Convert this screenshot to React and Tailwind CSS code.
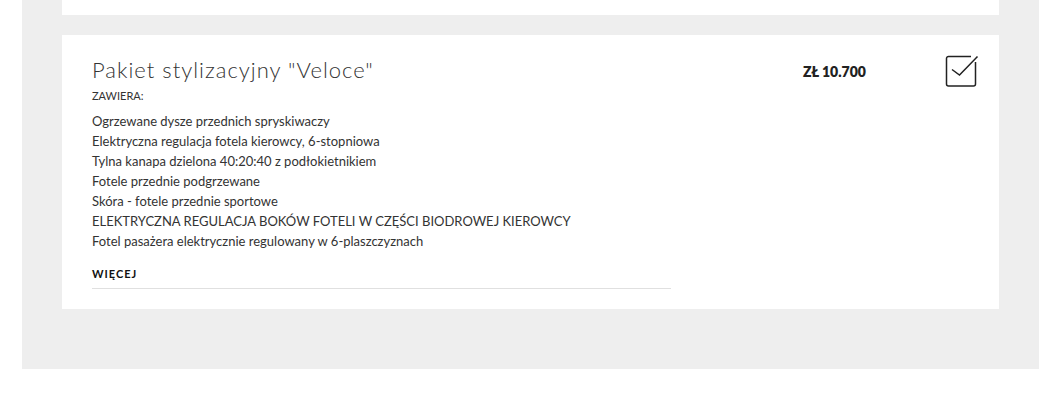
import React from 'react';

const items = [
  'Ogrzewane dysze przednich spryskiwaczy',
  'Elektryczna regulacja fotela kierowcy, 6-stopniowa',
  'Tylna kanapa dzielona 40:20:40 z podłokietnikiem',
  'Fotele przednie podgrzewane',
  'Skóra - fotele przednie sportowe',
  'ELEKTRYCZNA REGULACJA BOKÓW FOTELI W CZĘŚCI BIODROWEJ KIEROWCY',
  'Fotel pasażera elektrycznie regulowany w 6-plaszczyznach',
];

const CheckIcon = () => (
  <svg width="34" height="32" viewBox="0 0 34 32" fill="none">
    <path d="M26 1.5H3.5a2 2 0 0 0-2 2v25.5a2 2 0 0 0 2 2h25a2 2 0 0 0 2-2V7" stroke="#222" strokeWidth="1.5" />
    <path d="M7 14.5l7.5 5.5L32.5 1.5" stroke="#222" strokeWidth="1.5" />
  </svg>
);

const App = () => {
  return (
    <div className="min-h-screen bg-white font-['Lato','Liberation_Sans',sans-serif] text-[#333]">
      <div className="ml-[22px] w-[1017px] bg-[#eeeeee] px-[40px] pb-[60px]">
        <div className="h-[15px] bg-white" />

        <div className="mt-[20px] flex bg-white pl-[30px] pr-[20px] pt-[20px] pb-[20px]">
          <div className="w-[579px]">
            <h2 className="text-[22px] font-light leading-[30px] tracking-[1px] text-[#333]">
              Pakiet stylizacyjny "Veloce"
            </h2>
            <div className="mt-[4px] text-[11px] uppercase leading-[14px]">Zawiera:</div>
            <ul className="mt-[8px] text-[13px] leading-[20px]">
              {items.map((item, i) => (
                <li key={i}>{item}</li>
              ))}
            </ul>
            <div className="mt-[16px] border-b border-[#e0e0e0] pb-[7px] text-[11px] font-bold leading-[14px] tracking-[1px] text-[#111]">
              WIĘCEJ
            </div>
          </div>

          <div className="ml-[132px] pt-[6px] text-[14px] font-extrabold text-[#222]">ZŁ 10.700</div>

          <div className="ml-auto">
            <CheckIcon />
          </div>
        </div>
      </div>
    </div>
  );
};

export default App;
